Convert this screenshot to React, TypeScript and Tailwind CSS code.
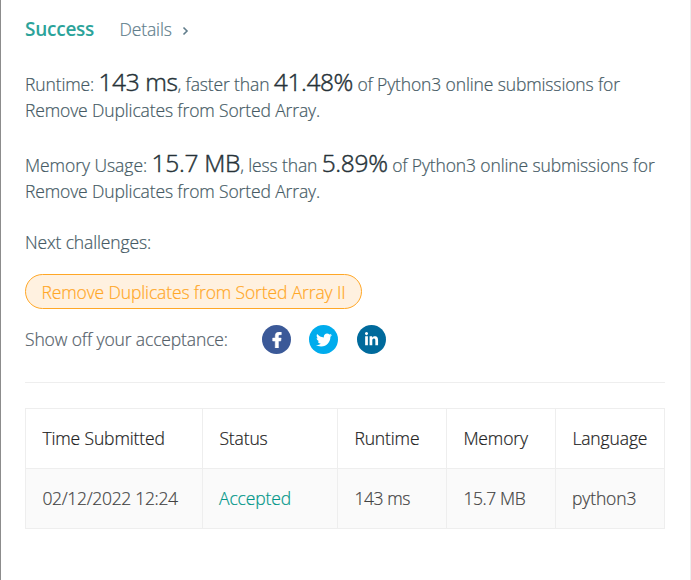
import { FaFacebookF, FaTwitter, FaLinkedinIn } from "react-icons/fa";

const headers = ["Time Submitted", "Status", "Runtime", "Memory", "Language"];

function Figure({ children, tight = false }: { children: string; tight?: boolean }) {
  return (
    <span
      className={`text-[24.5px] font-light text-[#263238] [-webkit-text-stroke:0.45px_#263238] ${
        tight ? "tracking-[-0.4px]" : "tracking-[-0.3px]"
      }`}
    >
      {children}
    </span>
  );
}

export default function App() {
  return (
    <main className="h-[580px] w-[691px] overflow-hidden border-l border-r border-l-[#8c8c8c] border-r-[#eeeeee] bg-white pl-6 pr-[25px] font-['Open_Sans','Noto_Sans',sans-serif] text-[17.5px] font-light tracking-[-0.13px] whitespace-nowrap text-[#455a64] [-webkit-text-stroke-width:0.2px]">
      <div className="flex h-[58px] items-center">
        <span className="w-[94.5px] text-[19px] font-semibold tracking-[-0.25px] text-[#2ca39a] [-webkit-text-stroke-width:0px]">Success</span>
        <span className="text-[#607d8b]">Details</span>
        <svg className="ml-2.5 mt-1" width="7" height="10" viewBox="0 0 7 10" fill="none" stroke="#607d8b" strokeWidth="1.6">
          <path d="M1.5 1.5 5 5 1.5 8.5" />
        </svg>
      </div>

      <p className="mt-[11px] h-[54px] leading-[26px]">
        <span>Runtime: </span>
        <Figure tight>143 ms</Figure>
        <span>, faster than </span>
        <Figure tight>41.48%</Figure>
        <span> of Python3 online submissions for</span>
        <br />
        <span>Remove Duplicates from Sorted Array.</span>
      </p>

      <p className="mt-[27px] h-[54px] leading-[26px]">
        <span className="tracking-[-0.05px]">Memory Usage: </span>
        <Figure>15.7 MB</Figure>
        <span>, less than </span>
        <Figure>5.89%</Figure>
        <span> of Python3 online submissions for</span>
        <br />
        <span>Remove Duplicates from Sorted Array.</span>
      </p>

      <p className="mt-[25px] h-[27px] leading-[26px]">Next challenges:</p>
      <a className="mt-[18px] flex h-[35px] w-[337px] items-center rounded-full border border-[#ffa726] bg-[#fff1e0] pt-px pl-[15.5px] text-[#ffa726]">
        Remove Duplicates from Sorted Array II
      </a>

      <div className="mt-4 flex h-[29px] items-center">
        <span className="w-[237px] text-[#546069]">Show off your acceptance:</span>
        <span className="flex size-[29px] items-center justify-center rounded-full bg-[#3b5998] text-white">
          <FaFacebookF size={16} stroke="currentColor" strokeWidth={18} />
        </span>
        <span className="ml-[18px] flex size-[29px] items-center justify-center rounded-full bg-[#00aced] text-white">
          <FaTwitter size={16} />
        </span>
        <span className="ml-[19px] flex size-[29px] items-center justify-center rounded-full bg-[#006a9c] pb-px text-white">
          <FaLinkedinIn size={15} />
        </span>
      </div>

      <hr className="mt-7 border-[#eeeeee]" />

      <table className="mt-[25px] w-[640px] table-fixed border-separate border-spacing-0 border-t border-l border-[#eeeeee] text-left">
        <colgroup>
          <col className="w-[177px]" />
          <col className="w-[135px]" />
          <col className="w-[109px]" />
          <col className="w-[109px]" />
          <col className="w-[109px]" />
        </colgroup>
        <thead>
          <tr className="text-[#212121]">
            {headers.map((h) => (
              <th key={h} className="h-[60px] border-r border-b border-[#eeeeee] p-0 pl-[16.4px] font-light">{h}</th>
            ))}
          </tr>
        </thead>
        <tbody>
          <tr className="bg-[#fafafa] text-[#424242]">
            <td className="h-[60px] border-r border-b border-[#eeeeee] p-0 pl-[16.4px] tracking-[-0.32px]">02/12/2022 12:24</td>
            <td className="border-r border-b border-[#eeeeee] p-0 pl-4 text-[#009688]">Accepted</td>
            <td className="border-r border-b border-[#eeeeee] p-0 pl-[16.4px] tracking-[-0.4px]">143 ms</td>
            <td className="border-r border-b border-[#eeeeee] p-0 pl-[16.4px] tracking-[-0.4px]">15.7 MB</td>
            <td className="border-r border-b border-[#eeeeee] p-0 pl-4">python3</td>
          </tr>
        </tbody>
      </table>
    </main>
  );
}
